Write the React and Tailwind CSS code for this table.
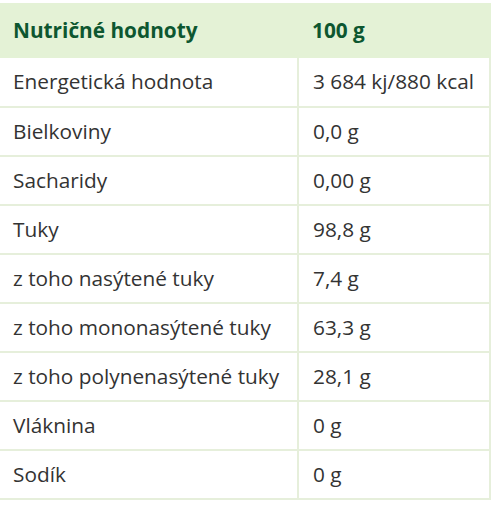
import React from "react";

const rows = [
  ["Energetická hodnota", "3 684 kj/880 kcal"],
  ["Bielkoviny", "0,0 g"],
  ["Sacharidy", "0,00 g"],
  ["Tuky", "98,8 g"],
  ["z toho nasýtené tuky", "7,4 g"],
  ["z toho mononasýtené tuky", "63,3 g"],
  ["z toho polynenasýtené tuky", "28,1 g"],
  ["Vláknina", "0 g"],
  ["Sodík", "0 g"],
];

const App = () => {
  return (
    <div
      className="bg-white pt-[3px] w-[501px] h-[510px]"
      style={{ fontFamily: '"Open Sans", sans-serif' }}
    >
      <table className="w-[491px] border-collapse text-[20.8px] text-[#333]">
        <thead>
          <tr className="bg-[#e4f2d6] h-[55px]">
            <th className="w-[298px] pl-[13px] text-left font-bold text-[#0d5730]">
              Nutričné hodnoty
            </th>
            <th className="pl-[14px] text-left font-bold text-[#0d5730] border-r-2 border-[#e4f2d6]">
              100 g
            </th>
          </tr>
        </thead>
        <tbody>
          {rows.map(([name, value]) => (
            <tr key={name} className="h-[49px] border-b-2 border-[#e6efdb]">
              <td className="pl-[13px] border-r-2 border-[#e6efdb]">{name}</td>
              <td className="pl-[14px] border-r-2 border-[#e6efdb]">{value}</td>
            </tr>
          ))}
        </tbody>
      </table>
    </div>
  );
};

export default App;
